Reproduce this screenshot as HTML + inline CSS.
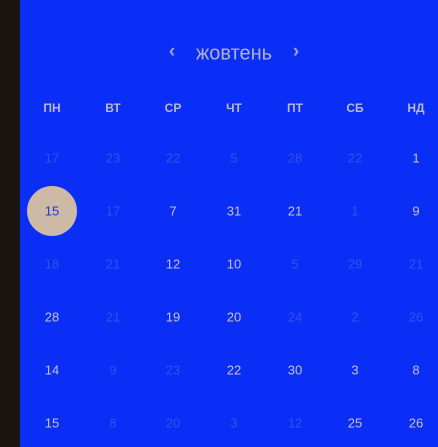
<!DOCTYPE html>
<html><head><meta charset="utf-8"><style>
body{margin:0;width:438px;height:447px;overflow:hidden;background:#0a2ef5;font-family:"Liberation Sans",sans-serif;position:relative}
.strip{position:absolute;left:0;top:0;width:20px;height:447px;background:#1b1511}
.t{position:absolute;transform:translate(-50%,-50%);white-space:nowrap}
.title{font-size:20px;color:#b0b0d4}
.arr{font-size:19px;color:#9aa0d8;font-weight:bold}
.h{font-size:12px;font-weight:bold;color:#b8b8d6}
.d{font-size:13px;color:#c4c0d8}
.m{font-size:13px;color:#3450ea}
.c{position:absolute;left:27px;top:186px;width:50px;height:50px;border-radius:50%;background:#cdb9a6}
</style></head><body>
<div class="strip"></div>
<div class="t arr" style="left:172px;top:52px">‹</div>
<div class="t title" style="left:234px;top:54px">жовтень</div>
<div class="t arr" style="left:296px;top:52px">›</div>
<div class="c"></div>
<div id="g"></div>
<script>
const xs=[52,113,173,234,295,355,416];
const hs=["ПН","ВТ","СР","ЧТ","ПТ","СБ","НД"];
let h="";
hs.forEach((s,i)=>h+=`<div class="t h" style="left:${xs[i]}px;top:108px">${s}</div>`);
const rows=[
[["17",0],["23",0],["22",0],["5",0],["28",0],["22",0],["1",1]],
[["15",2],["17",0],["7",1],["31",1],["21",1],["1",0],["9",1]],
[["18",0],["21",0],["12",1],["10",1],["5",0],["29",0],["21",0]],
[["28",1],["21",0],["19",1],["20",1],["24",0],["2",0],["26",0]],
[["14",1],["9",0],["23",0],["22",1],["30",1],["3",1],["8",1]],
[["15",1],["8",0],["20",0],["3",0],["12",0],["25",1],["26",1]]];
rows.forEach((r,ri)=>r.forEach(([n,k],i)=>{
 const y=158+ri*53;
 const st=k==2?'color:#1a3bd8':'';
 h+=`<div class="t ${k==0?'m':'d'}" style="left:${xs[i]}px;top:${y}px;${st}">${n}</div>`;
}));
document.getElementById('g').innerHTML=h;
</script>
</body></html>
